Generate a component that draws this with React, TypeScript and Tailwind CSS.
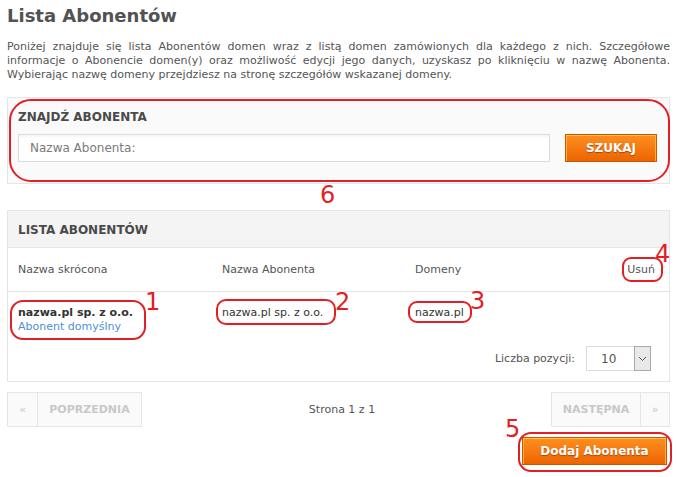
import React from "react"

// red hand-drawn style markers laid over the page
const rings = [
  { l: 9, t: 99, w: 661, h: 83, r: "rounded-[22px]" },
  { l: 10, t: 300, w: 136, h: 40, r: "rounded-[13px]" },
  { l: 216, t: 299, w: 120, h: 26, r: "rounded-[10px]" },
  { l: 408, t: 301, w: 64, h: 22, r: "rounded-[9px]" },
  { l: 622, t: 257, w: 41, h: 25, r: "rounded-[9px]" },
  { l: 518, t: 432, w: 154, h: 40, r: "rounded-[13px]" },
]

const digits = [
  { n: "1", l: 145, t: 290 },
  { n: "2", l: 335, t: 290 },
  { n: "3", l: 470, t: 289 },
  { n: "4", l: 655, t: 242 },
  { n: "5", l: 505, t: 417 },
  { n: "6", l: 320, t: 183 },
]

function OrangeButton({ children, className }: { children: React.ReactNode; className?: string }) {
  return (
    <button
      className={
        "flex items-center justify-center border border-[#c95700] bg-gradient-to-b from-[#ff8f1f] to-[#ec6400] text-white font-bold shadow-[inset_0_1px_0_#ffc04a,inset_1px_0_0_#ffb03a,inset_-1px_0_0_#ffb03a] [text-shadow:0_1px_1px_rgba(120,40,0,0.6)] " +
        (className ?? "")
      }
    >
      {children}
    </button>
  )
}

export default function App() {
  return (
    <div className="relative w-[677px] h-[477px] overflow-hidden bg-white px-[7px] pt-[4px] text-[#505050] text-[11px] leading-[14px] font-['DejaVu_Sans',Verdana,sans-serif]">
      <h1 className="text-[18px] leading-[24px] font-bold text-[#525252]">Lista Abonentów</h1>

      <div className="mt-[12px] text-[#555]">
        <p className="text-justify [text-align-last:justify]">
          Poniżej znajduje się lista Abonentów domen wraz z listą domen zamówionych dla każdego z nich. Szczegółowe
        </p>
        <p className="text-justify [text-align-last:justify]">
          informacje o Abonencie domen(y) oraz możliwość edycji jego danych, uzyskasz po kliknięciu w nazwę Abonenta.
        </p>
        <p>Wybierając nazwę domeny przejdziesz na stronę szczegółów wskazanej domeny.</p>
      </div>

      {/* search */}
      <div className="mt-[15px] border border-[#e6e6e6] bg-[#fafafa] pl-[10px] pr-[12px] pt-[11px] pb-[21px]">
        <div className="text-[12px] leading-[16px] font-bold text-[#4a4a4a]">ZNAJDŹ ABONENTA</div>
        <div className="mt-[9px] flex gap-[15px]">
          <div className="flex h-[28px] w-[532px] items-center border border-[#dcdcdc] bg-white pl-[11px] text-[12px] text-[#7a7a7a] shadow-[inset_0_2px_2px_rgba(0,0,0,0.04)]">
            Nazwa Abonenta:
          </div>
          <OrangeButton className="h-[28px] w-[92px] text-[12px]">SZUKAJ</OrangeButton>
        </div>
      </div>

      {/* list */}
      <div className="mt-[26px] border border-[#e6e6e6]">
        <div className="flex h-[37px] items-center border-b border-[#e6e6e6] bg-[#f4f4f4] pl-[10px] pt-[1px] text-[12px] font-bold text-[#4a4a4a]">
          LISTA ABONENTÓW
        </div>
        <div className="flex h-[44px] items-center border-b border-[#e6e6e6] pl-[10px] pr-[14px] text-[#555]">
          <div className="w-[204px]">Nazwa skrócona</div>
          <div className="w-[193px]">Nazwa Abonenta</div>
          <div className="flex-1">Domeny</div>
          <div>Usuń</div>
        </div>
        <div className="flex pl-[10px] pt-[14px]">
          <div className="w-[204px]">
            <div className="font-bold text-[#333]">nazwa.pl sp. z o.o.</div>
            <div className="text-[#4d8fd8]">Abonent domyślny</div>
          </div>
          <div className="w-[193px] text-[#333]">nazwa.pl sp. z o.o.</div>
          <div className="flex-1 text-[#333]">nazwa.pl</div>
        </div>
        <div className="mt-[12px] flex items-center justify-end gap-[11px] pr-[18px] pb-[10px]">
          <span className="text-[#555]">Liczba pozycji:</span>
          <div className="flex h-[25px] w-[65px] border border-[#dcdcdc] bg-white">
            <span className="flex flex-1 items-center pl-[14px] text-[12px] text-[#555]">10</span>
            <span className="-my-px -mr-px flex w-[17px] items-center justify-center border border-[#a9a9a9] bg-[#e9e9e9]">
              <svg width="9" height="6" viewBox="0 0 9 6" fill="none">
                <path d="M1 1l3.5 3.5L8 1" stroke="#555" strokeWidth="1" />
              </svg>
            </span>
          </div>
        </div>
      </div>

      {/* pagination */}
      <div className="mt-[10px] flex h-[35px] items-stretch text-[11px]">
        <div className="flex border border-[#e6e6e6] bg-[#fafafa] font-bold text-[#c8c8c8]">
          <span className="flex w-[30px] items-center justify-center border-r border-[#e6e6e6] font-normal">«</span>
          <span className="flex w-[103px] items-center justify-center">POPRZEDNIA</span>
        </div>
        <div className="flex flex-1 items-center justify-center pr-[9px] text-[#555]">Strona 1 z 1</div>
        <div className="flex border border-[#e6e6e6] bg-[#fafafa] font-bold text-[#c8c8c8]">
          <span className="flex w-[89px] items-center justify-center border-r border-[#e6e6e6]">NASTĘPNA</span>
          <span className="flex w-[28px] items-center justify-center font-normal">»</span>
        </div>
      </div>

      <div className="mt-[10px] flex justify-end pr-[3px]">
        <OrangeButton className="h-[28px] w-[145px] text-[12px]">Dodaj Abonenta</OrangeButton>
      </div>

      {rings.map((r, i) => (
        <div
          key={i}
          className={"pointer-events-none absolute border-2 border-[#e31f26] " + r.r}
          style={{ left: r.l, top: r.t, width: r.w, height: r.h }}
        />
      ))}
      {digits.map((d) => (
        <span
          key={d.n}
          className="absolute text-[24px] leading-[24px] text-[#e31f26] font-['DejaVu_Sans',sans-serif]"
          style={{ left: d.l, top: d.t }}
        >
          {d.n}
        </span>
      ))}
    </div>
  )
}
